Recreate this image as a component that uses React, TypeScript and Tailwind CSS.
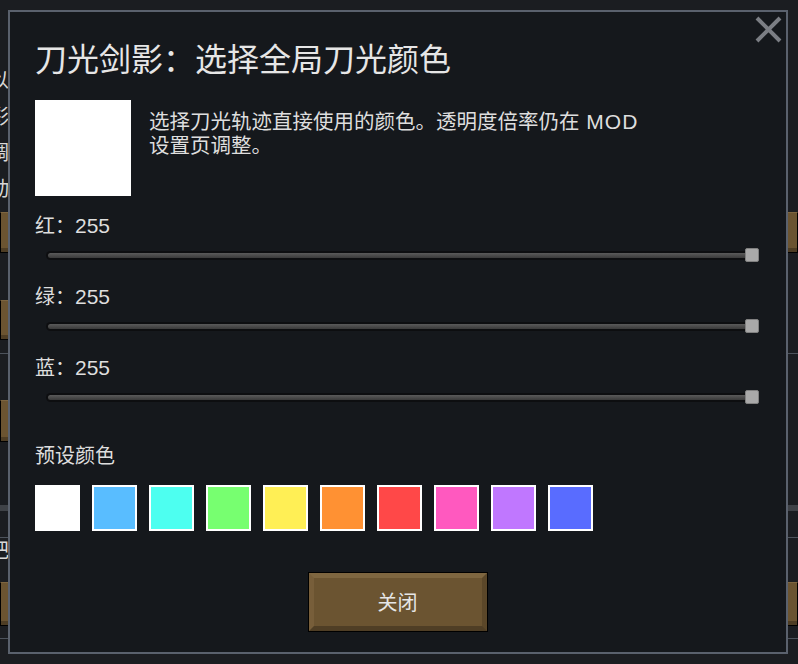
import React from "react";

const FONT = "font-['Noto_Sans_CJK_SC','Noto_Sans',sans-serif]";
// latin glyphs render a bit wider than the CJK ones in the game UI
const LATIN = "font-['Liberation_Sans','Noto_Sans_CJK_SC',sans-serif] text-[21px] leading-none";

const presets = [
  "#ffffff",
  "#59bdff",
  "#4dfff0",
  "#77ff70",
  "#ffef55",
  "#ff9133",
  "#ff4848",
  "#ff59bf",
  "#c077ff",
  "#596cff",
];

// brown RimWorld-like button surface
function BrownBar({ className = "" }: { className?: string }) {
  return (
    <div className={`border border-black bg-[#6b5431] border-t-[#7d6540] ${className}`}>
      <div className="h-full border-b-[4px] border-[#4e3d24]" />
    </div>
  );
}

function ColorSlider({ label, value }: { label: string; value: number }) {
  return (
    <div>
      <div className="text-[20px] leading-[24px] text-[#dedede]">
        {label}：<span className={LATIN}>{value}</span>
      </div>
      <div className="relative mt-[11px] flex h-[14px] items-center">
        <div className="ml-[11px] mr-[8px] flex h-[9px] flex-1 items-center rounded-full bg-[#0d0e10] px-[2px]">
          <div className="h-[5px] w-full rounded-full bg-gradient-to-b from-[#5a5a5a] to-[#3a3a3a]" />
        </div>
        <div className="absolute right-[1px] top-0 h-[14px] w-[14px] rounded-[2px] border border-[#808080] bg-[#a9a9a9]" />
      </div>
    </div>
  );
}

export default function App() {
  return (
    <div className={`relative h-[664px] w-[798px] overflow-hidden bg-[#1b1d21] ${FONT}`}>
      {/* settings page behind the dialog */}
      <div className="flex flex-col pt-[62px]">
        <div className="-ml-[11px] text-[20px] leading-[36px] text-[#d8d8d8]">
          <div>以</div>
          <div>彩</div>
          <div>调</div>
          <div>动</div>
        </div>
        <BrownBar className="mt-[6px] h-[41px] w-full" />
        <BrownBar className="mt-[47px] h-[40px] w-[200px]" />
        <div className="mt-[13px] h-px w-full bg-[#4d535c]" />
        <BrownBar className="mt-[46px] h-[42px] w-[200px]" />
        <div className="mt-[63px] h-[6px] w-full bg-[#3f4247]" />
        <div className="mt-[26px] h-px w-full bg-[#4d535c]" />
        <div className="-ml-[11px] text-[20px] leading-[24px] text-[#d8d8d8]">把</div>
        <BrownBar className="mt-[20px] h-[44px] w-full" />
        <div className="mt-[12px] h-px w-full bg-[#4d535c]" />
      </div>

      {/* dialog */}
      <div className="absolute left-[8px] top-[10px] h-[644px] w-[780px] border-2 border-[#5a616d] bg-[#15181c]">
        <button className="absolute right-[4px] top-[4px]">
          <svg width="27" height="27" viewBox="0 0 27 27">
            <path d="M2 2 L25 25 M25 2 L2 25" stroke="#7b7e84" strokeWidth="4" />
          </svg>
        </button>

        <div className="flex flex-col pl-[25px] pr-[26px] pt-[27px]">
          <h1 className="text-[32px] leading-[36px] text-[#e6e6e6]">刀光剑影：选择全局刀光颜色</h1>

          <div className="mt-[25px] flex gap-[18px]">
            <div className="h-[96px] w-[96px] bg-white" />
            <p className="mt-[8px] w-[505px] text-[20.5px] leading-[24px] text-[#dedede]">
              选择刀光轨迹直接使用的颜色。透明度倍率仍在
              <span className={`${LATIN} tracking-[1px]`}> MOD </span>
              设置页调整。
            </p>
          </div>

          <div className="mt-[17px] flex flex-col gap-[22px]">
            <ColorSlider label="红" value={255} />
            <ColorSlider label="绿" value={255} />
            <ColorSlider label="蓝" value={255} />
          </div>

          <div className="mt-[39px] text-[20px] leading-[24px] text-[#dedede]">预设颜色</div>
          <div className="mt-[18px] flex gap-[12px]">
            {presets.map((c) => (
              <div key={c} className="h-[46px] w-[45px] border-2 border-white" style={{ backgroundColor: c }} />
            ))}
          </div>

          <div className="mt-[41px] flex justify-center">
            <button className="h-[60px] w-[180px] border border-black bg-[#6b5431]">
              <div className="flex h-full w-full items-center justify-center border-[5px] border-b-[#4f3e25] border-l-[#775e3a] border-r-[#5b4729] border-t-[#7e6640] text-[20px] text-[#e6e6e6]">
                关闭
              </div>
            </button>
          </div>
        </div>
      </div>
    </div>
  );
}
